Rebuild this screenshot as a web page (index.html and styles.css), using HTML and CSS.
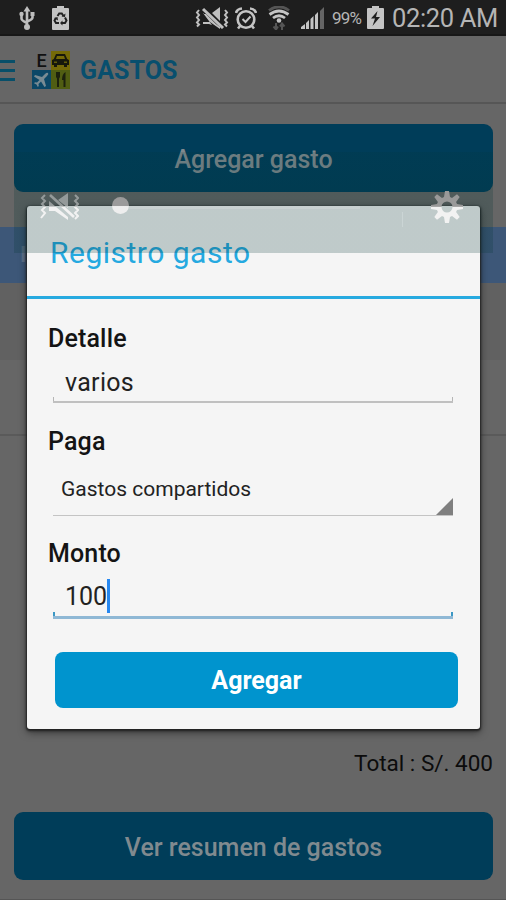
FILE: index.html
```html
<!DOCTYPE html>
<html lang="es">
<head>
<meta charset="utf-8">
<title>Gastos</title>
<link rel="stylesheet" href="styles.css">
</head>
<body>
<div class="screen">
  <header class="status">
    <svg class="usb" width="16" height="24" viewBox="0 0 16 24" fill="none" stroke="#bdbdbd" stroke-width="2.600"><path d="M8 3v18M2.500 8v4.500q0 2 5.500 4.500M13.500 8v3.500q0 2-5.500 4"/><path d="M4.500 5.500 8 0l3.500 5.500z" fill="#bdbdbd" stroke="none"/><circle cx="2.500" cy="8" r="2.200" fill="#bdbdbd" stroke="none"/><path d="M11.500 6h4v4h-4z" fill="#bdbdbd" stroke="none"/><circle cx="8" cy="21" r="3" fill="#bdbdbd" stroke="none"/></svg>
    <svg class="recycle" width="17" height="24" viewBox="0 0 17 24"><path d="M5 0h7v2h4q1 0 1 1v20q0 1-1 1H1q-1 0-1-1V3q0-1 1-1h4z" fill="#c4c4c4"/><path d="M5.500 10 7.200 7.500h2.600L11.500 10M13 11.500l1.500 3-1.500 2.500h-3M7 17H4l-1.500-2.500L4 12" fill="none" stroke="#222" stroke-width="2"/><path d="m9.500 10.500 3.500.5.500-3.500zM10.500 14.500v5L8 17zM2 12l3.500-1 .5 3.500z" fill="#222"/></svg>
    <span class="spacer"></span>
    <svg class="mute" width="34" height="22" viewBox="0 0 34 22" fill="none" stroke="#c0c0c0"><path d="M8 6v11h6l3 1zM17 6l8-6v14zM8 7h3l10 10 4 3v2L15 15H8z" fill="#c0c0c0" stroke="none"/><path d="M8 2l20 19" stroke-width="3"/><path d="m4 3-2 2.500 2 2.500-2 2.500 2 2.500-2 2.500 2 2-2 2M30 3l2 2.500-2 2.500 2 2.500-2 2.500 2 2.500-2 2 2 2" stroke-width="2"/></svg>
    <svg class="alarm" width="22" height="23" viewBox="0 0 22 23" fill="none" stroke="#c4c4c4" stroke-width="2.600"><circle cx="11" cy="12.500" r="8.300"/><path d="m7.500 12 3 3 5-5.500" stroke-width="2"/><path d="M1 6q1-4 6-4.500M15 1.500q5 .5 6 4.500M5.500 18.500l-2.500 3M16.500 18.500l2.500 3"/></svg>
    <svg class="wifi" width="24" height="24" viewBox="0 0 24 24" fill="none" stroke-width="2.800"><path d="M2 4.500Q12-3 22 4.500" stroke="#555"/><path d="M2.500 8.500q9.500-7 19 0M6 12q6-4.500 12 0" stroke="#c4c4c4"/><circle cx="12" cy="14.500" r="2.300" fill="#c4c4c4"/><path d="M9 17v6M6.500 20.500 9 23.500l2-3M15 24v-6M13 20.500l2-3 2.500 3" stroke="#555" stroke-width="2"/></svg>
    <svg class="signal" width="24" height="22" viewBox="0 0 24 22"><path d="M0 22v-2l4-3v5zM5 22v-6l3-3v9zM9.500 22v-10l3-3v13zM14 22V8l3-3v17z" fill="#c4c4c4"/><path d="M19 22V4l4-4v22z" fill="#656565"/></svg>
    <span class="pct">99%</span>
    <svg class="charge" width="17" height="24" viewBox="0 0 17 24"><path d="M5 0h7v2h4q1 0 1 1v19q0 1-1 1H1q-1 0-1-1V3q0-1 1-1h4z" fill="#c4c4c4"/><path d="M10.500 5 4 12.500h4L5.500 20l7.500-9H9z" fill="#1e1e1e"/></svg>
    <span class="clock">02:20 AM</span>
  </header>

  <nav class="appbar">
    <div class="menu"><i></i><i></i><i></i></div>
    <div class="logo">
      <span class="tile letter">E</span>
      <span class="tile car"><svg width="17" height="15" viewBox="0 0 17 15"><path d="M4 1h9l2.200 5L17 7v5h-2v2h-3v-2H5v2H2v-2H0V7l1.800-1zM5 3 4 6h9l-1-3z" fill="#17180c" fill-rule="evenodd"/><path d="M2 8.500h3v1.500H2zM12 8.500h3v1.500h-3z" fill="#655d08"/></svg></span>
      <span class="tile plane"><svg width="15" height="15" viewBox="0 0 15 15"><path d="M14 1q1 1-1 3l-3 3 2 7-1.500 1L7 9.500 4.500 12l.3 2-1 1L2.500 12.500 0 11.200l1-1 2 .3L5.500 8 0 4.500 1 3l7 2 3-3q2-2 3-1z" fill="#788b94"/></svg></span>
      <span class="tile food"><svg width="10" height="15" viewBox="0 0 10 15"><path d="M0 0v5l1 1.500V15h2V6.500L4 5V0zM9.500 0Q6 2 6 8h1.500v7h2z" fill="#1c210d"/></svg></span>
    </div>
    <h1>GASTOS</h1>
  </nav>

  <main>
    <div class="button add">Agregar gasto</div>
    <div class="list">
      <div class="list-head"><span>I</span></div>
      <div class="row"></div>
      <div class="row last"></div>
    </div>
    <p class="total">Total : S/. 400</p>
    <div class="button">Ver resumen de gastos</div>
  </main>

  <section class="dialog">
    <h2>Registro gasto</h2>
    <div class="form">
      <label>Detalle</label>
      <div class="field"><span>varios</span></div>
      <label>Paga</label>
      <div class="select"><span>Gastos compartidos</span></div>
      <label>Monto</label>
      <div class="field active"><span>100</span><i class="caret"></i></div>
      <div class="submit">Agregar</div>
    </div>
  </section>

  <aside class="volume">
    <svg class="vol-mute" width="39" height="27" viewBox="0 0 39 27" fill="none" stroke="url(#fade)">
      <defs>
        <linearGradient id="fade" gradientUnits="userSpaceOnUse" x1="0" y1="0" x2="0" y2="27"><stop offset=".48" stop-color="#949a9a"/><stop offset=".52" stop-color="#f2f2f2"/></linearGradient>
      </defs>
      <path d="M9 8l19 16v3l-13-9H9zM18 7l10-7v15z" fill="url(#fade)" stroke="none"/>
      <path d="M10 2l24 22" stroke-width="2.600"/>
      <path d="m5 2-3 3 3 3-3 3 3 3-3 3 3 3-4 5M35 2l3 3-3 3 3 3-3 3 3 3-3 3 3 3-3 3" stroke-width="2"/>
    </svg>
    <i class="knob"></i>
    <i class="track"></i>
    <i class="divider"></i>
    <svg class="gear" width="32" height="32" viewBox="-16 -16 32 32">
      <defs><linearGradient id="gearFade" gradientUnits="userSpaceOnUse" x1="0" y1="-16" x2="0" y2="16"><stop offset=".48" stop-color="#999"/><stop offset=".51" stop-color="#f2f2f2"/></linearGradient></defs>
      <path fill="url(#gearFade)" fill-rule="evenodd" d="M-3-10-2-16H2l1 6 2 .9 5-3.600 2.700 2.700-3.600 5L10-3l6 1v4l-6 1-.9 2 3.600 5-2.700 2.700-5-3.600L3 10 2 16h-4l-1-6-2-.9-5 3.600-2.700-2.700 3.600-5L-10 3l-6-1v-4l6-1 .9-2-3.600-5 2.700-2.700 5 3.600zM0-5.500A5.500 5.500 0 1 0 0 5.500 5.500 5.500 0 1 0 0-5.500z"/>
    </svg>
  </aside>
</div>
</body>
</html>
```
FILE: styles.css
```css
* { box-sizing: border-box; }
body { margin: 0; font-family: Roboto, "Liberation Sans", sans-serif; }
h1, h2, p { margin: 0; }
svg { display: block; flex: none; }

.screen {
  position: relative;
  width: 506px;
  height: 900px;
  overflow: hidden;
  background: #666;
  border-bottom: 1px solid #555;
}

.status {
  height: 36px;
  padding: 2px 9px 0 19px;
  display: flex;
  align-items: center;
  background: #1e1e1e;
  border-bottom: 2px solid #171717;
  color: #b5b5b5;
}
.recycle { margin-left: 17px; }
.spacer { flex: 1; }
.mute { margin-right: 6px; }
.alarm { margin-right: 10px; }
.wifi { margin-right: 10px; }
.signal { margin-right: 7px; }
.pct { width: 31px; font-size: 17px; letter-spacing: -.8px; white-space: nowrap; }
.charge { margin: 0 8px 0 4px; }
.clock { width: 105px; font-size: 25.500px; letter-spacing: -.35px; line-height: 34px; white-space: nowrap; }

.appbar {
  height: 68px;
  padding-top: 2px;
  display: flex;
  align-items: center;
  border-bottom: 2px solid #565656;
}
.menu { width: 15px; display: flex; flex-direction: column; gap: 6px; }
.menu i { height: 3px; background: #084f69; }
.logo { margin-left: 17px; display: grid; grid-template-columns: 19px 19px; grid-template-rows: 19px 19px; }
.tile { display: flex; align-items: center; justify-content: center; }
.letter { color: #111; font-size: 18px; font-weight: 500; }
.car { background: #756a08; }
.plane { background: #0b4767; }
.food { background: #505d12; }
h1 { margin-left: 10px; padding-top: 2px; color: #084f6e; font-size: 25px; font-weight: 700; letter-spacing: .1px; line-height: 34px; }

main { display: flex; flex-direction: column; padding-top: 20px; }
.button {
  height: 68px;
  margin: 0 13px 0 14px;
  border-radius: 9px;
  background: #003d59;
  color: #808a8f;
  font-size: 25px;
  font-weight: 500;
  line-height: 71px;
  text-align: center;
}
.list { margin-top: 35px; }
.list-head { height: 56px; padding: 15px 20px; background: #3d5778; color: #5f7189; font-size: 22px; line-height: 26px; font-weight: 700; }
.row { height: 77px; background: #616161; }
.last { height: 76px; background: #666; border-bottom: 2px solid #5a5a5a; }
.total { margin: 311px 13px 33px 0; color: #0c0c0c; font-size: 22.500px; line-height: 32px; text-align: right; }

.dialog {
  position: absolute;
  left: 27px;
  top: 206px;
  width: 453px;
  height: 523px;
  background: #f5f5f5;
  border-radius: 3px;
  box-shadow: 0 1px 2px 1px #222, 0 3px 9px rgba(0, 0, 0, .55);
}
h2 {
  height: 93px;
  padding: 29px 0 0 23px;
  border-bottom: 3px solid #27aae0;
  color: #25a9e0;
  font-size: 30px;
  letter-spacing: .5px;
  font-weight: 400;
  line-height: 36px;
}
.form { display: flex; flex-direction: column; padding: 25px 22px 0 21px; }
label { color: #141414; font-size: 25px; font-weight: 500; letter-spacing: .15px; line-height: 30px; }
.field, .select { position: relative; width: 400px; margin-left: 5px; color: #222; }
.field {
  height: 49px;
  padding: 12px 0 0 12px;
  border-bottom: 2px solid #c0c0c0;
  margin-bottom: 24px;
  display: flex;
  font-size: 25px;
  letter-spacing: .3px;
  line-height: 34px;
}
.field::before, .field::after { content: ""; position: absolute; bottom: 0; width: 1px; height: 4px; background: #b5b5b5; }
.field::before { left: 0; }
.field::after { right: 0; }
.select { height: 59px; padding: 16px 0 0 8px; border-bottom: 1px solid #c4c4c4; margin-bottom: 23px; font-size: 21px; line-height: 32px; }
.select::after { content: ""; position: absolute; right: 0; bottom: 0; width: 17px; height: 17px; background: #7f7f7f; clip-path: polygon(100% 0, 100% 100%, 0 100%); }
.active { padding-top: 11px; border-bottom: 3px solid #8fb8d5; margin-bottom: 33px; height: 50px; letter-spacing: 0; }
.active::before, .active::after { width: 2px; background: #3b98c5; }
.caret { width: 3px; height: 34px; margin-top: -1px; background: #2788f0; }
.submit {
  width: 403px;
  height: 56px;
  margin-left: 7px;
  border-radius: 8px;
  background: #0094ce;
  color: #fff;
  font-size: 25px;
  font-weight: 700;
  line-height: 58px;
  text-align: center;
}

.volume { position: absolute; left: 14px; top: 152px; width: 479px; height: 101px; background: linear-gradient(rgba(4, 53, 52, .15), rgba(4, 53, 52, .224) 40%); }
.vol-mute { position: absolute; left: 26px; top: 41px; }
.knob { position: absolute; left: 98px; top: 45px; width: 17px; height: 17px; border-radius: 50%; background: linear-gradient(#9b9b9b 50%, #eee 56%); }
.track { position: absolute; left: 115px; top: 54px; width: 231px; height: 3px; background: rgba(255, 255, 255, .14); }
.divider { position: absolute; left: 388px; top: 60px; width: 1px; height: 15px; background: #cbd5d5; }
.gear { position: absolute; left: 417px; top: 39px; }
```
